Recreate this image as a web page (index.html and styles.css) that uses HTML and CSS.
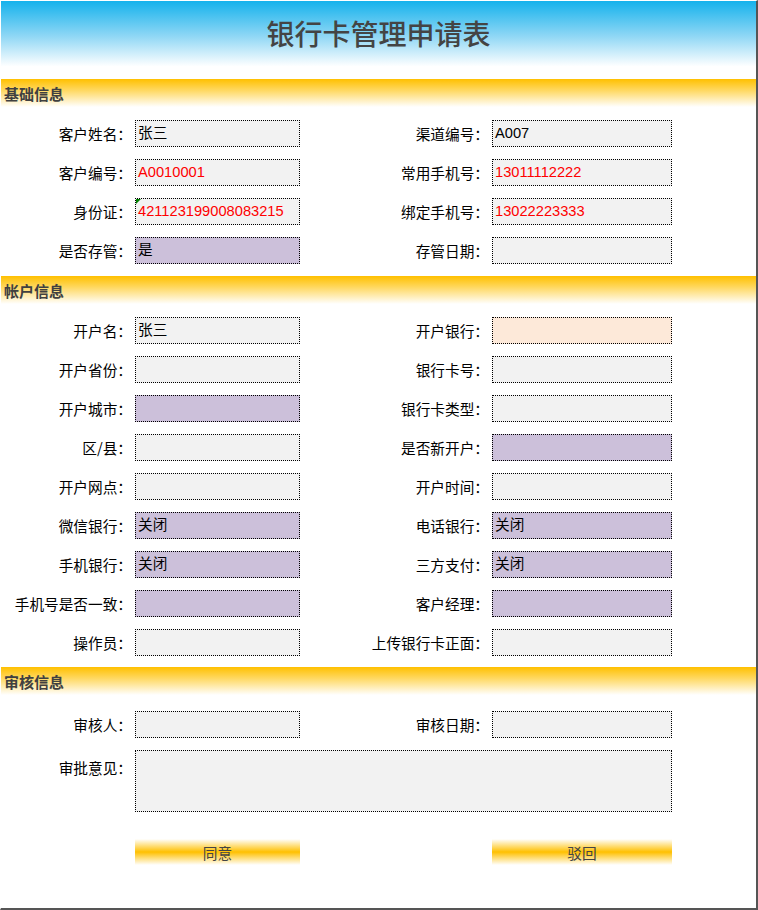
FILE: index.html
```html
<!DOCTYPE html>
<html lang="zh-CN">
<head>
<meta charset="utf-8">
<title>银行卡管理申请表</title>
<link rel="stylesheet" href="styles.css">
</head>
<body>
<div class="page">
  <header class="head"><h1 class="title">银行卡管理申请表</h1></header>

  <section class="sec">
    <h2 class="bar">基础信息</h2>
    <div class="rows">
      <div class="row">
        <label class="lbl">客户姓名<span class="colon">：</span></label><div class="fld">张三</div>
        <label class="lbl">渠道编号<span class="colon">：</span></label><div class="fld">A007</div>
      </div>
      <div class="row">
        <label class="lbl">客户编号<span class="colon">：</span></label><div class="fld red">A0010001</div>
        <label class="lbl">常用手机号<span class="colon">：</span></label><div class="fld red">13011112222</div>
      </div>
      <div class="row">
        <label class="lbl">身份证<span class="colon">：</span></label><div class="fld red flag">421123199008083215</div>
        <label class="lbl">绑定手机号<span class="colon">：</span></label><div class="fld red">13022223333</div>
      </div>
      <div class="row">
        <label class="lbl">是否存管<span class="colon">：</span></label><div class="fld pur">是</div>
        <label class="lbl">存管日期<span class="colon">：</span></label><div class="fld"></div>
      </div>
    </div>
  </section>

  <section class="sec">
    <h2 class="bar">帐户信息</h2>
    <div class="rows rows-last">
      <div class="row">
        <label class="lbl">开户名<span class="colon">：</span></label><div class="fld">张三</div>
        <label class="lbl">开户银行<span class="colon">：</span></label><div class="fld peach"></div>
      </div>
      <div class="row">
        <label class="lbl">开户省份<span class="colon">：</span></label><div class="fld"></div>
        <label class="lbl">银行卡号<span class="colon">：</span></label><div class="fld"></div>
      </div>
      <div class="row">
        <label class="lbl">开户城市<span class="colon">：</span></label><div class="fld pur"></div>
        <label class="lbl">银行卡类型<span class="colon">：</span></label><div class="fld"></div>
      </div>
      <div class="row">
        <label class="lbl">区/县<span class="colon">：</span></label><div class="fld"></div>
        <label class="lbl">是否新开户<span class="colon">：</span></label><div class="fld pur"></div>
      </div>
      <div class="row">
        <label class="lbl">开户网点<span class="colon">：</span></label><div class="fld"></div>
        <label class="lbl">开户时间<span class="colon">：</span></label><div class="fld"></div>
      </div>
      <div class="row">
        <label class="lbl">微信银行<span class="colon">：</span></label><div class="fld pur">关闭</div>
        <label class="lbl">电话银行<span class="colon">：</span></label><div class="fld pur">关闭</div>
      </div>
      <div class="row">
        <label class="lbl">手机银行<span class="colon">：</span></label><div class="fld pur">关闭</div>
        <label class="lbl">三方支付<span class="colon">：</span></label><div class="fld pur">关闭</div>
      </div>
      <div class="row">
        <label class="lbl">手机号是否一致<span class="colon">：</span></label><div class="fld pur"></div>
        <label class="lbl">客户经理<span class="colon">：</span></label><div class="fld pur"></div>
      </div>
      <div class="row">
        <label class="lbl">操作员<span class="colon">：</span></label><div class="fld"></div>
        <label class="lbl">上传银行卡正面<span class="colon">：</span></label><div class="fld"></div>
      </div>
    </div>
  </section>

  <section class="sec">
    <h2 class="bar">审核信息</h2>
    <div class="rows rows-audit">
      <div class="row">
        <label class="lbl">审核人<span class="colon">：</span></label><div class="fld"></div>
        <label class="lbl">审核日期<span class="colon">：</span></label><div class="fld"></div>
      </div>
      <div class="row row-wide">
        <label class="lbl lbl-top">审批意见<span class="colon">：</span></label><div class="fld area"></div>
      </div>
    </div>
  </section>

  <div class="actions">
    <button class="btn btn-ok">同意</button>
    <button class="btn btn-back">驳回</button>
  </div>
</div>
</body>
</html>
```

FILE: styles.css
```css
* { box-sizing: border-box; }
html, body { margin: 0; padding: 0; background: #fff; }
body {
  font-family: "Liberation Sans", "Noto Sans CJK SC", sans-serif;
  font-size: 14px;
  color: #000;
}
.page {
  width: 758px;
  height: 910px;
  border-top: 1px solid #fff;
  border-left: 1px solid #fff;
  border-right: 2px solid #555;
  border-bottom: 2px solid #555;
  background: #fff;
}
.head {
  height: 78px;
  background: linear-gradient(to bottom, #15b2ec 0%, #8fd7f5 45%, #ffffff 84%, #ffffff 100%);
  display: flex;
  justify-content: center;
  padding-top: 15px;
}
.title {
  margin: 0;
  font-family: "Noto Sans CJK SC", sans-serif;
  font-weight: 500;
  font-size: 28px;
  line-height: 34px;
  color: #444;
}
.sec { display: block; }
.bar {
  margin: 0;
  height: 28px;
  padding-left: 3px;
  background: linear-gradient(to bottom, #ffc000 0%, #ffd860 40%, #fff 100%);
  font-family: "Noto Sans CJK SC", sans-serif;
  font-size: 15px;
  font-weight: bold;
  line-height: 30px;
  color: #404040;
}
.rows {
  display: flex;
  flex-direction: column;
  gap: 12px;
  padding: 13px 0 12px;
}
.rows-last { padding-bottom: 11px; }
.rows-audit { padding-top: 16px; }
.row {
  display: grid;
  grid-template-columns: 134px 165px 192px 180px;
  height: 27px;
}
.lbl {
  font-family: "Noto Sans CJK SC", sans-serif;
  font-size: 14.67px;
  text-align: right;
  padding-right: 3px;
  line-height: 27px;
  white-space: nowrap;
  color: #000;
}
.colon { font-family: "Noto Sans CJK TC", sans-serif; }
.fld {
  position: relative;
  border: 1px dotted #000;
  background: #f2f2f2;
  height: 27px;
  padding-left: 2px;
  line-height: 25px;
  font-size: 14.67px;
  white-space: nowrap;
  overflow: hidden;
}
.red { color: #ff0000; }
.pur { background: #ccc0da; }
.peach { background: #fde9d9; }
.flag::before {
  content: "";
  position: absolute;
  left: 0;
  top: 0;
  border-top: 5px solid #008000;
  border-right: 5px solid transparent;
}
.row-wide {
  grid-template-columns: 134px 537px;
  height: 62px;
}
.lbl-top { line-height: 20px; padding-top: 8px; }
.area { height: 62px; }
.actions {
  display: grid;
  grid-template-columns: 134px 165px 192px 180px;
  padding-top: 15px;
}
.btn {
  height: 26px;
  border: 0;
  padding: 0;
  background: linear-gradient(to bottom, #fff 0%, #ffc000 50%, #fff 100%);
  font-family: "Noto Sans CJK SC", sans-serif;
  font-size: 14.67px;
  color: #444;
  cursor: pointer;
}
.btn-ok { grid-column: 2; }
.btn-back { grid-column: 4; }
```
